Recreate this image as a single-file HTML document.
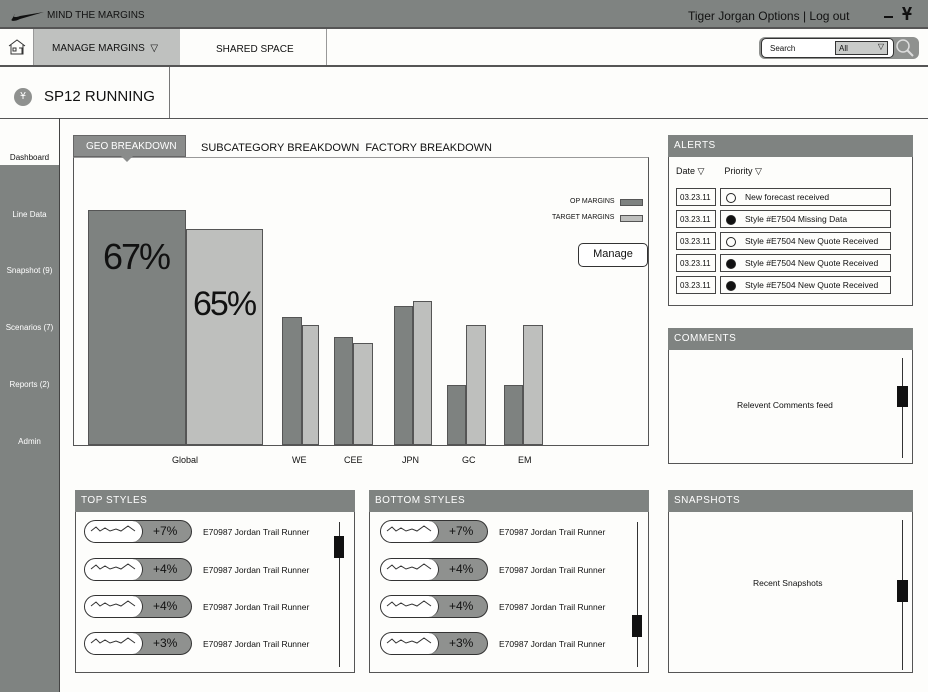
<!DOCTYPE html>
<html><head><meta charset="utf-8"><style>
*{margin:0;padding:0;box-sizing:border-box}
body{width:928px;height:692px;position:relative;background:#fdfdfb;font-family:"Liberation Sans",sans-serif;color:#111;overflow:hidden}
.a{position:absolute;white-space:nowrap}
.hd{background:#7f8381;color:#fff;font-size:10px;padding:5px 0 0 6px;letter-spacing:.5px}
.pnl{border:1px solid #555;background:#fdfdfb}
.bar{position:absolute;border:1px solid #555;bottom:0}
.dk{background:#7e8280}.lt{background:#bebfbd}
.lbl{font-size:9px;top:455px}
.side{color:#fff;font-size:8px;width:59px;text-align:center}
.dt{border:1px solid #444;font-size:8px;padding:4px 0 0 3px;height:18px;width:40px;left:676px}
.msg{border:1px solid #444;font-size:8.5px;padding:3px 0 0 24px;height:18px;width:171px;left:720px}
.dot{position:absolute;left:5px;top:4px;width:10px;height:10px;border-radius:50%;border:1px solid #222}
.pill{position:absolute;width:108px;height:23px;border:1.5px solid #333;border-radius:12px;background:#8f918f;overflow:hidden}
.pill .w{position:absolute;left:0;top:0;width:58px;height:100%;background:#fff;border-right:1.5px solid #333;border-radius:0 12px 12px 0}
.pill .v{position:absolute;left:68px;top:3px;font-size:12px}
.st{font-size:8.5px}
</style></head><body>
<div class="a" style="left:0;top:0;width:928px;height:29px;background:#7f8381;border-bottom:2px solid #555"></div>
<svg class="a" style="left:10px;top:10px" width="36" height="12"><path d="M2 9 C0 11 4 12 10 9 L34 2 L10 6 C5 8 2 7 5 4 Z" fill="#111"/></svg>
<div class="a" style="left:47px;top:10px;font-size:10px;color:#111">MIND THE MARGINS</div>
<div class="a" style="left:688px;top:9px;font-size:12px;color:#111">Tiger Jorgan Options | Log out</div>
<div class="a" style="left:884px;top:16px;width:9px;height:2px;background:#111"></div>
<div class="a" style="left:902px;top:4px;font-size:18px;font-weight:bold;color:#111">Ұ</div>
<div class="a" style="left:0;top:29px;width:34px;height:37px;border-right:1px solid #999"></div>
<svg class="a" style="left:8px;top:39px" width="18" height="16"><path d="M1 7 L9 1 L17 7 M3 6 V15 H15 V6 M5 9 h3 v3 h-3z M11 9 h3 v6" fill="none" stroke="#333"/></svg>
<div class="a" style="left:34px;top:29px;width:146px;height:37px;background:#bfc1bf"></div>
<div class="a" style="left:52px;top:43px;font-size:10px">MANAGE MARGINS &nbsp;▽</div>
<div class="a" style="left:180px;top:29px;width:147px;height:37px;border-right:1px solid #999"></div>
<div class="a" style="left:216px;top:44px;font-size:10px">SHARED SPACE</div>
<div class="a" style="left:759px;top:37px;width:160px;height:22px;background:#8f918f;border-radius:6px"></div>
<div class="a" style="left:761px;top:38px;width:133px;height:20px;background:#fff;border:1px solid #333;border-radius:5px"></div>
<div class="a" style="left:770px;top:44px;font-size:8px">Search</div>
<div class="a" style="left:835px;top:41px;width:53px;height:14px;background:#c9cbc9;border:1px solid #333;font-size:8px;padding:2px 0 0 3px">All<span style="position:absolute;right:3px;top:0">▽</span></div>
<svg class="a" style="left:895px;top:38px" width="20" height="20"><circle cx="8" cy="8" r="6" fill="none" stroke="#ddd" stroke-width="1.5"/><path d="M12 12 L18 18" stroke="#ddd" stroke-width="2"/></svg>
<div class="a" style="left:0;top:65px;width:928px;height:2px;background:#555"></div>
<div class="a" style="left:14px;top:88px;width:18px;height:18px;border-radius:50%;background:#8f918f;color:#fff;font-size:10px;text-align:center;line-height:18px">Ұ</div>
<div class="a" style="left:44px;top:88px;font-size:15px">SP12 RUNNING</div>
<div class="a" style="left:169px;top:67px;width:1px;height:52px;background:#777"></div>
<div class="a" style="left:0;top:118px;width:928px;height:1px;background:#555"></div>
<div class="a" style="left:0;top:165px;width:59px;height:527px;background:#7f8381"></div>
<div class="a" style="left:59px;top:118px;width:1px;height:574px;background:#444"></div>
<div class="a side" style="top:153px;color:#111">Dashboard</div>
<div class="a side" style="top:210px">Line Data</div>
<div class="a side" style="top:266px">Snapshot (9)</div>
<div class="a side" style="top:323px">Scenarios (7)</div>
<div class="a side" style="top:380px">Reports (2)</div>
<div class="a side" style="top:437px">Admin</div>
<div class="a" style="left:73px;top:157px;width:576px;height:289px;border:1px solid #555;border-top-color:#999;background:#fdfdfb"></div>
<div class="a" style="left:73px;top:135px;width:113px;height:22px;background:#8a8c8b;color:#fff;font-size:10px;padding:5px 0 0 12px;border:1px solid #666">GEO BREAKDOWN</div>
<div class="a" style="left:121px;top:156px;width:0;height:0;border-left:6px solid transparent;border-right:6px solid transparent;border-top:6px solid #8a8c8b"></div>
<div class="a" style="left:201px;top:142px;font-size:11px">SUBCATEGORY BREAKDOWN &nbsp;FACTORY BREAKDOWN</div>
<div class="a" style="left:73px;top:157px;width:576px;height:288px">
<div class="bar dk" style="left:15px;width:98px;height:235px"></div>
<div class="bar lt" style="left:113px;width:77px;height:216px"></div>
<div class="bar dk" style="left:209px;width:20px;height:128px"></div><div class="bar lt" style="left:229px;width:17px;height:120px"></div>
<div class="bar dk" style="left:261px;width:19px;height:108px"></div><div class="bar lt" style="left:280px;width:20px;height:102px"></div>
<div class="bar dk" style="left:321px;width:19px;height:139px"></div><div class="bar lt" style="left:340px;width:19px;height:144px"></div>
<div class="bar dk" style="left:374px;width:19px;height:60px"></div><div class="bar lt" style="left:393px;width:20px;height:120px"></div>
<div class="bar dk" style="left:431px;width:19px;height:60px"></div><div class="bar lt" style="left:450px;width:20px;height:120px"></div>
</div>
<div class="a" style="left:103px;top:236px;font-size:36px;letter-spacing:-2px;color:#111">67%</div>
<div class="a" style="left:193px;top:285px;font-size:34px;letter-spacing:-2px;color:#111">65%</div>
<div class="a lbl" style="left:172px">Global</div><div class="a lbl" style="left:292px">WE</div><div class="a lbl" style="left:344px">CEE</div><div class="a lbl" style="left:402px">JPN</div><div class="a lbl" style="left:462px">GC</div><div class="a lbl" style="left:518px">EM</div>
<div class="a" style="left:570px;top:198px;font-size:7px">OP MARGINS</div>
<div class="a" style="left:620px;top:199px;width:23px;height:7px;background:#7e8280;border:1px solid #555"></div>
<div class="a" style="left:552px;top:214px;font-size:7px">TARGET MARGINS</div>
<div class="a" style="left:620px;top:215px;width:23px;height:7px;background:#bebfbd;border:1px solid #555"></div>
<div class="a" style="left:578px;top:243px;width:70px;height:24px;border:1.5px solid #333;border-radius:5px;background:#fff;font-size:11px;text-align:center;padding-top:4px">Manage</div>
<div class="a pnl" style="left:668px;top:135px;width:245px;height:171px"></div>
<div class="a hd" style="left:668px;top:135px;width:245px;height:22px">ALERTS</div>
<div class="a" style="left:676px;top:166px;font-size:9px">Date ▽ &nbsp;&nbsp;&nbsp;&nbsp;&nbsp;&nbsp;&nbsp;Priority ▽</div>
<div class="a dt" style="top:188px">03.23.11</div><div class="a msg" style="top:188px"><span class="dot"></span>New forecast received</div>
<div class="a dt" style="top:210px">03.23.11</div><div class="a msg" style="top:210px"><span class="dot" style="background:#111"></span>Style #E7504 Missing Data</div>
<div class="a dt" style="top:232px">03.23.11</div><div class="a msg" style="top:232px"><span class="dot"></span>Style #E7504 New Quote Received</div>
<div class="a dt" style="top:254px">03.23.11</div><div class="a msg" style="top:254px"><span class="dot" style="background:#111"></span>Style #E7504 New Quote Received</div>
<div class="a dt" style="top:276px">03.23.11</div><div class="a msg" style="top:276px"><span class="dot" style="background:#111"></span>Style #E7504 New Quote Received</div>
<div class="a pnl" style="left:668px;top:328px;width:245px;height:136px"></div>
<div class="a hd" style="left:668px;top:328px;width:245px;height:22px">COMMENTS</div>
<div class="a" style="left:737px;top:400px;font-size:8.5px">Relevent Comments feed</div>
<div class="a" style="left:902px;top:358px;width:1px;height:100px;background:#333"></div>
<div class="a" style="left:897px;top:386px;width:11px;height:21px;background:#111"></div>
<div class="a pnl" style="left:668px;top:490px;width:245px;height:183px"></div>
<div class="a hd" style="left:668px;top:490px;width:245px;height:22px">SNAPSHOTS</div>
<div class="a" style="left:753px;top:578px;font-size:8.5px">Recent Snapshots</div>
<div class="a" style="left:902px;top:520px;width:1px;height:150px;background:#333"></div>
<div class="a" style="left:897px;top:580px;width:11px;height:22px;background:#111"></div>
<div class="a pnl" style="left:75px;top:490px;width:280px;height:183px"></div>
<div class="a hd" style="left:75px;top:490px;width:280px;height:22px">TOP STYLES</div>
<div class="a" style="left:339px;top:522px;width:1px;height:145px;background:#333"></div>
<div class="a" style="left:334px;top:536px;width:10px;height:22px;background:#111"></div>
<div class="a pnl" style="left:369px;top:490px;width:280px;height:183px"></div>
<div class="a hd" style="left:369px;top:490px;width:280px;height:22px">BOTTOM STYLES</div>
<div class="a" style="left:637px;top:522px;width:1px;height:145px;background:#333"></div>
<div class="a" style="left:632px;top:615px;width:10px;height:22px;background:#111"></div>
<div id="rows"></div>
<script>
var tops=[520,558,595,632],vals=["+7%","+4%","+4%","+3%"],h="";
[84,380].forEach(function(x){tops.forEach(function(t,i){
h+='<div class="pill" style="left:'+x+'px;top:'+t+'px"><div class="w"><svg width="58" height="20"><path d="M6 10 L11 6 L15 10 L20 7 L25 10 L31 8 L36 10 L43 5 L50 10" fill="none" stroke="#333"/></svg></div><span class="v">'+vals[i]+'</span></div><div class="a st" style="left:'+(x+119)+'px;top:'+(t+7)+'px">E70987 Jordan Trail Runner</div>';});});
document.getElementById('rows').innerHTML=h;
</script>
</body></html>
